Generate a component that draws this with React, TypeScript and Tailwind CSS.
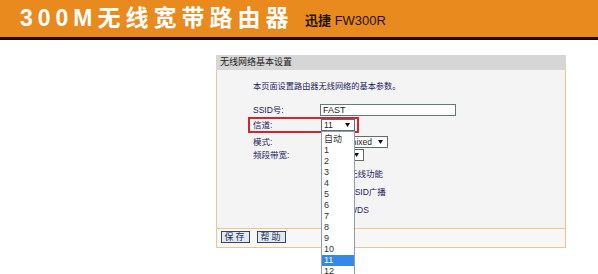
import React from 'react';

const channels = ['自动', '1', '2', '3', '4', '5', '6', '7', '8', '9', '10', '11', '12', '13'];

const Arrow = () => (
  <svg width="5" height="4" viewBox="0 0 5 4" className="shrink-0">
    <path d="M0 0h5L2.5 4z" fill="#111" />
  </svg>
);

interface SelectProps {
  value: string;
  width: string;
  children?: React.ReactNode;
}

const Select: React.FC<SelectProps> = ({ value, width, children }) => (
  <div className={`relative flex h-[12px] items-center justify-between border border-[#5d6e6e] bg-white pl-[2px] pr-[4px] leading-[10px] text-[#222] ${width}`}>
    <span>{value}</span>
    <Arrow />
    {children}
  </div>
);

const CheckRow = ({ label }: { label: string }) => (
  <div className="flex h-[18px] items-center">
    <span className="w-[68px]" />
    <span className="mr-[2px] h-[9px] w-[9px] border border-[#555] bg-white" />
    <span>{label}</span>
  </div>
);

export default function App() {
  return (
    <div className="relative h-[274px] w-[598px] overflow-hidden bg-white font-['Liberation_Sans','Noto_Sans_CJK_SC',sans-serif]">
      {/* top banner */}
      <div className="flex h-[37px] items-center bg-[#e98a1e] pl-[20px]">
        <span className="w-[285px] text-[23px] font-bold leading-none tracking-[5px] text-white">300M无线宽带路由器</span>
        <span className="mt-[3px] text-[13px] leading-none text-[#24140a]">
          <span className="font-bold">迅捷</span> FW300R
        </span>
      </div>
      <div className="h-[3px] bg-[#1c0b02]" />

      {/* settings panel */}
      <div className="ml-[216px] mt-[15px] w-[350px]">
        <div className="h-[15px] bg-[#d6d6d6] pl-[4px] text-[9px] leading-[15px] text-[#222]">无线网络基本设置</div>

        <div className="h-[158px] border-x border-[#efc48f] bg-[#f4f4f4] pl-[36px] pt-[11px] text-[8.5px] text-[#1e2260]">
          <div className="h-[12px] text-[8.2px] leading-[12px]">本页面设置路由器无线网络的基本参数。</div>

          <div className="mt-[11px] flex h-[12px] items-center">
            <span className="w-[67px]">SSID号:</span>
            <div className="h-[12px] w-[136px] border border-[#66777a] bg-white pl-[2px] text-[9px] leading-[10px] text-[#222]">FAST</div>
          </div>

          <div className="-ml-[5px] mt-[1px] flex h-[16px] w-fit items-center border-2 border-[#d3252d] pl-[3px] pr-[2px]">
            <span className="w-[68px]">信道:</span>
            <Select value="11" width="w-[34px]">
              <div className="absolute left-[-1px] top-[11px] z-10 w-[34px] border border-[#8e9fb3] bg-white pt-[2px]">
                {channels.map((c) => (
                  <div
                    key={c}
                    className={c === '11' ? 'h-[11px] bg-[#3489e6] pl-[2px] text-[9px] leading-[11px] text-white' : 'h-[11px] pl-[2px] text-[9px] leading-[11px] text-[#333]'}
                  >
                    {c}
                  </div>
                ))}
              </div>
            </Select>
          </div>

          <div className="mt-[3px] flex h-[12px] items-center">
            <span className="w-[68px]">模式:</span>
            <Select value="11bgn mixed" width="w-[67px]" />
          </div>

          <div className="mt-[1px] flex h-[12px] items-center">
            <span className="w-[68px]">频段带宽:</span>
            <Select value="自动" width="w-[43px]" />
          </div>

          <div className="mt-[4px]">
            <CheckRow label="开启无线功能" />
            <CheckRow label="开启SSID广播" />
            <CheckRow label="开启WDS" />
          </div>
        </div>

        <div className="flex h-[20px] gap-[7px] border border-[#efc48f] bg-[#f7f7f7] pl-[4px] pt-[2px]">
          <button className="flex h-[12px] w-[29px] items-center justify-center border border-[#36495a] bg-[#e3e9ee] text-[9px] leading-[10px] tracking-[2px] text-[#1c2c5c]">保存</button>
          <button className="flex h-[12px] w-[29px] items-center justify-center border border-[#36495a] bg-[#e3e9ee] text-[9px] leading-[10px] tracking-[2px] text-[#1c2c5c]">帮助</button>
        </div>
      </div>
    </div>
  );
}
